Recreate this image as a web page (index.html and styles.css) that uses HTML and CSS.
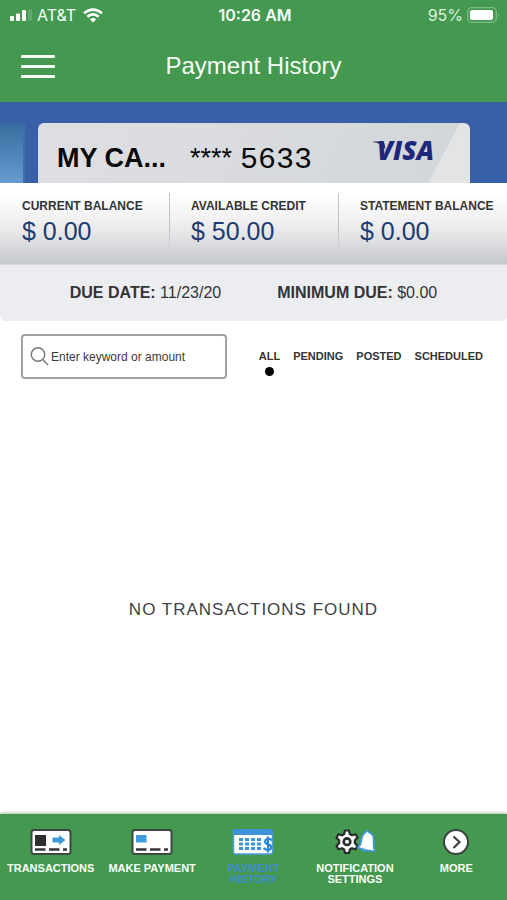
FILE: index.html
```html
<!DOCTYPE html>
<html lang="en">
<head>
<meta charset="utf-8">
<meta name="viewport" content="width=device-width, initial-scale=1">
<title>Payment History</title>
<link rel="stylesheet" href="styles.css">
</head>
<body>
<header class="top">
  <div class="status">
    <div class="status-side">
      <svg width="23" height="12" viewBox="0 0 23 12" fill="#fff" aria-hidden="true"><rect y="7" width="4" height="5" rx="1"/><rect x="6" y="4.500" width="4" height="7.500" rx="1"/><rect x="12" y="1" width="4" height="11" rx="1"/><rect x="18" width="4" height="12" rx="1" opacity=".15"/></svg>
      <span>AT&amp;T</span>
      <svg class="wifi" width="20" height="15" viewBox="0 0 20 15" fill="none" stroke="#fff" stroke-width="2.600" aria-hidden="true"><path d="M1 5.200Q10 -2 19 5.200M4.300 8.700Q10 4 15.700 8.700"/><path d="M6.800 11.200Q10 8.600 13.200 11.200L10 14.600z" fill="#fff" stroke="none"/></svg>
    </div>
    <time class="clock">10:26 AM</time>
    <div class="status-side status-end">
      <span>95%</span>
      <svg width="33" height="16" viewBox="0 0 33 16" aria-hidden="true"><rect x=".7" y=".7" width="28.600" height="14.600" rx="4" fill="none" stroke="#7dbb87" stroke-width="1.300"/><rect x="3" y="3" width="23" height="10" rx="2" fill="#fff"/><path d="M31 5.500q2 2.500 0 5z" fill="#7dbb87"/></svg>
    </div>
  </div>
  <div class="titlebar">
    <button class="menu" type="button" aria-label="Menu"><span></span><span></span><span></span></button>
    <h1>Payment History</h1>
  </div>
</header>
<main>
  <section class="cards" aria-label="Cards">
    <div class="previous"></div>
    <div class="card">
      <span class="card-name">MY CA...</span>
      <span class="mask">****</span>
      <span class="digits">5633</span>
      <span class="visa"><svg width="14" height="8" viewBox="0 0 14 8" aria-hidden="true"><path d="M0 .5H8Q11 .5 11.500 3L12.500 8Q8 2 0 1z" fill="#1d2368"/></svg>VISA</span>
    </div>
  </section>
  <dl class="balances">
    <div><dt>CURRENT BALANCE</dt><dd>$ 0.00</dd></div>
    <div><dt>AVAILABLE CREDIT</dt><dd>$ 50.00</dd></div>
    <div><dt>STATEMENT BALANCE</dt><dd>$ 0.00</dd></div>
  </dl>
  <section class="due">
    <p><b>DUE DATE:</b> 11/23/20</p>
    <p><b>MINIMUM DUE:</b> $0.00</p>
  </section>
  <section class="filters">
    <label class="search">
      <svg width="19" height="19" viewBox="0 0 19 19" fill="none" stroke="#77787a" stroke-width="1.500" aria-hidden="true"><circle cx="8" cy="7.500" r="6.700"/><path d="M12.700 12.500L18 18"/></svg>
      <input type="text" aria-label="Search transactions" placeholder="Enter keyword or amount">
    </label>
    <div class="tabs">
      <button class="active" type="button">ALL</button>
      <button type="button">PENDING</button>
      <button type="button">POSTED</button>
      <button type="button">SCHEDULED</button>
    </div>
  </section>
  <p class="empty">NO TRANSACTIONS FOUND</p>
</main>
<nav class="bottom">
  <a href="#transactions">
    <svg width="42" height="28" viewBox="0 0 42 28" aria-hidden="true"><rect x="1.500" y="2" width="39" height="24" rx="2.500" fill="#fff" stroke="#3d4642" stroke-width="2"/><path d="M5 7h11v11H5z" fill="#2e2d2f"/><path d="M22.500 9.500h6.500V7l6.500 5-6.500 5v-2.500h-6.500z" fill="#3f9bdb"/><path d="M5 21.500h10.500M19 21.500h10.500M33 21.500h4" stroke="#343638" stroke-width="2.600"/></svg>
    TRANSACTIONS
  </a>
  <a href="#payment">
    <svg width="42" height="28" viewBox="0 0 42 28" aria-hidden="true"><rect x="1.500" y="2" width="39" height="24" rx="2.500" fill="#fff" stroke="#3d4642" stroke-width="2"/><path d="M5 7h10.500v7.500H5z" fill="#3f9bdb"/><path d="M5 21.500h10.500M19 21.500h10.500M33 21.500h4" stroke="#343638" stroke-width="2.600"/></svg>
    MAKE PAYMENT
  </a>
  <a class="current" href="#history" aria-current="page">
    <svg width="42" height="28" viewBox="0 0 42 28" aria-hidden="true"><rect x="1.500" y="2" width="39" height="24" rx="2" fill="#fff" stroke="#4b9be0" stroke-width="1.500"/><path d="M1 3q0-2 2-2h36q2 0 2 2v4H1z" fill="#3f91dc"/><path d="M7 11.500h22M7 16h22M7 20.500h22" stroke="#3f91dc" stroke-width="3.200" stroke-dasharray="4 2"/><path d="M40 12.500q-1.500-2-4-1.500c-4 .3-3.500 4.700-.3 5.300 4.600.7 4.300 5.400.3 5.700q-3 0-4.200-2.200M36 8.500v16" fill="none" stroke="#2f86d4" stroke-width="2.200"/></svg>
    PAYMENT HISTORY
  </a>
  <a href="#notifications">
    <svg width="42" height="28" viewBox="0 0 42 28" aria-hidden="true"><path d="M11 2.500h4l.8 3.500 2.200 1.300 3.500-1 2 3.500-2.600 2.500v2.900l2.600 2.500-2 3.500-3.500-1-2.200 1.300-.8 3.500h-4l-.8-3.500L8 20.200l-3.500 1-2-3.500 2.600-2.500v-2.900L2.500 9.800l2-3.500 3.500 1L10.200 6z" fill="#fff" stroke="#252c29" stroke-width="2.200" stroke-linejoin="round"/><circle cx="13" cy="13.700" r="3.300" fill="#fff" stroke="#252c29" stroke-width="2.600"/><path d="M31.500 4.500q1.500-3 3.500-.3 5.500 2.800 4.500 8.300l.3 7.500 1.200 3.500-9-1.500-8.500-2.500 3-3 1-5q1-5.500 4-7z" fill="#fff" stroke="#3f98e0" stroke-width="1.700" stroke-linejoin="round"/><path d="M27.500 21.500l5 1.200q-2.200 4-5-1.200z" fill="#3f98e0"/></svg>
    NOTIFICATION SETTINGS
  </a>
  <a href="#more">
    <svg width="28" height="28" viewBox="0 0 28 28" fill="none" stroke="#3a4340" aria-hidden="true"><circle cx="14" cy="14" r="12" fill="#fff" stroke-width="2"/><path d="M11.500 8.500L17.500 14l-6 6" stroke-width="2.200"/></svg>
    MORE
  </a>
</nav>
</body>
</html>
```

FILE: styles.css
```css
* { box-sizing: border-box; }
body {
  margin: 0;
  min-height: 100vh;
  display: flex;
  flex-direction: column;
  background: #fff;
  color: #333436;
  font-family: "Liberation Sans", Arial, sans-serif;
}
h1, p, dl, dd { margin: 0; }
button { border: 0; padding: 0; background: none; color: inherit; font: inherit; }
svg { display: block; flex: none; }

.top { background: #449850; color: #f5fff5; }
.status {
  display: grid;
  grid-template-columns: 1fr auto 1fr;
  align-items: center;
  height: 30px;
  padding: 0 7px 0 10px;
  font: 16px "Inter", sans-serif;
}
.status-side { display: flex; align-items: center; gap: 4px; }
.status-side .wifi { margin-left: 3px; }
.status-end { justify-content: flex-end; color: #dcf3dd; }
.clock { font-weight: 600; }
.titlebar {
  display: grid;
  grid-template-columns: 1fr auto 1fr;
  align-items: center;
  height: 72px;
  padding: 0 21px;
}
.menu { display: flex; flex-direction: column; gap: 7px; width: 34px; }
.menu span { height: 3px; border-radius: 1px; background: #f4fff4; }
h1 { font-size: 24px; font-weight: 400; line-height: 28px; }

main { flex: 1; display: flex; flex-direction: column; }
.cards {
  display: flex;
  gap: 13px;
  height: 81px;
  padding: 21px 37px 0 0;
  background: #3860a6;
}
.previous { width: 25px; background: linear-gradient(#376c9f, #659bce); border-right: 2px solid #3e71aa; }
.card {
  flex: 1;
  display: flex;
  align-items: center;
  padding: 10px 36px 0 19px;
  border-radius: 6px 6px 0 0;
  background: linear-gradient(118deg, #dedfe2, #d4d7da 91%, #e3e4e6 91%);
  color: #08090b;
}
.card-name { font-size: 27px; font-weight: 700; }
.mask { margin-left: 24px; font-size: 27px; line-height: 24px; }
.digits { margin-left: 8px; padding-top: 4px; font: 30px/30px "Liberation Mono", monospace; }
.visa {
  display: flex;
  align-items: flex-start;
  margin: 0 0 16px auto;
  color: #1d277b;
  font: italic 800 26px/24px "Open Sans", sans-serif;
}
.visa svg { margin: 3px -10px 0 0; }

.balances {
  display: grid;
  grid-template-columns: repeat(3, 1fr);
  height: 82px;
  padding-top: 10px;
  border-bottom: 1px solid #d8dadd;
  background: linear-gradient(#fff 15%, #ececee 55%, #c5c8cb);
}
.balances div { padding: 5px 0 0 22px; white-space: nowrap; }
.balances div + div {
  background: linear-gradient(#c4c6c9, #bfc2c5 60%, transparent) left top / 1px 62px no-repeat;
}
dt { font-size: 12px; line-height: 16px; font-weight: 700; }
dd { padding-top: 3px; color: #203c70; font-size: 25px; line-height: 28px; }
.due {
  display: flex;
  justify-content: center;
  align-items: center;
  gap: 56px;
  height: 56px;
  border-radius: 0 0 5px 5px;
  background: #ecedf0;
  font-size: 16px;
}

.filters { display: flex; justify-content: space-between; padding: 13px 24px 0 21px; }
.search {
  display: flex;
  align-items: center;
  gap: 2px;
  width: 206px;
  height: 45px;
  padding: 0 7px;
  border: 2px solid #a0a1a3;
  border-radius: 4px;
}
.search input {
  flex: 1;
  min-width: 0;
  padding: 0;
  border: 0;
  outline: 0;
  background: none;
  color: #3a3a3c;
  font: 12px "Liberation Sans", Arial, sans-serif;
}
.search input::placeholder { color: #3a3a3c; opacity: 1; }
.tabs { display: flex; gap: 13px; align-items: flex-start; padding-top: 15px; font-size: 11px; line-height: 14px; font-weight: 700; }
.active::after { content: ""; display: block; width: 9px; height: 9px; margin: 4px auto 0; border-radius: 50%; background: #000; }
.empty { margin: auto; padding-top: 26px; font-size: 17px; letter-spacing: 1px; color: #424345; }

.bottom {
  display: grid;
  grid-template-columns: repeat(5, 1fr);
  height: 86px;
  padding-top: 14px;
  background: #449850;
  box-shadow: 0 -1px 3px #a9b9aa;
}
.bottom a {
  display: flex;
  flex-direction: column;
  align-items: center;
  gap: 7px;
  color: #f8fff8;
  font-size: 11px;
  line-height: 11px;
  font-weight: 700;
  text-align: center;
  text-decoration: none;
}
.bottom .current { color: #3f8ecb; }
```
